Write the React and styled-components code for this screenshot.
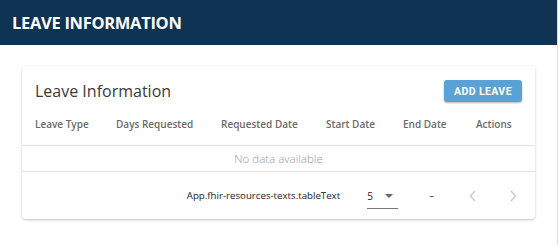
import React from "react";
import styled, { createGlobalStyle } from "styled-components";

const Global = createGlobalStyle`
  html, body { margin: 0; padding: 0; background: #fff; }
  body { font-family: "Open Sans", "Liberation Sans", sans-serif; }
`;

const Page = styled.div`
  width: 557px;
  height: 245px;
  border-right: 1px solid #dcdcdc;
  background: #fff;
`;

const TopBar = styled.header`
  height: 45px;
  background: #0f3352;
  display: flex;
  align-items: center;
  padding-left: 12px;
  color: #fff;
  font-weight: 700;
  font-size: 16.5px;
  letter-spacing: -0.3px;
`;

const Content = styled.main`
  padding: 21px 22px 0 22px;
`;

const Card = styled.section`
  width: 513px;
  height: 153px;
  background: #fff;
  border-radius: 4px;
  box-shadow: 0 1px 3px rgba(0, 0, 0, 0.2), 0 1px 1px rgba(0, 0, 0, 0.06);
  display: flex;
  flex-direction: column;
`;

const TitleRow = styled.div`
  display: flex;
  align-items: center;
  justify-content: space-between;
  padding: 14px 13px 0 13px;
  height: 22px;
`;

const Title = styled.h2`
  margin: 0;
  font-size: 16px;
  font-weight: 400;
  color: #3a3a3a;
`;

const AddButton = styled.button`
  width: 78px;
  height: 22px;
  border: none;
  border-radius: 3px;
  background: #5aa2d6;
  color: #fff;
  font-family: "Roboto", "Liberation Sans", sans-serif;
  font-weight: 700;
  font-size: 10.5px;
  letter-spacing: 0.4px;
  box-shadow: 0 1px 2px rgba(0, 0, 0, 0.3);
  padding: 0;
`;

const Grid = styled.div`
  display: grid;
  grid-template-columns: 81px 105px 105px 77px 73px 1fr;
  padding-left: 13px;
  align-items: center;
`;

const HeadRow = styled(Grid)`
  height: 43px;
  border-bottom: 1px solid #e3e3e3;
`;

const HeadCell = styled.div`
  font-size: 10px;
  font-weight: 600;
  color: #6a6a6a;
  white-space: nowrap;
`;

const EmptyRow = styled.div`
  height: 25px;
  display: flex;
  align-items: center;
  justify-content: center;
  border-bottom: 1px solid #e3e3e3;
  font-size: 11.5px;
  font-weight: 300;
  color: #9a9a9a;
`;

const Footer = styled.div`
  flex: 1;
  display: flex;
  align-items: center;
  justify-content: flex-end;
  padding-right: 16px;
  font-size: 9.7px;
  color: #222;
`;

const FooterText = styled.span`
  margin-right: 27px;
`;

const Select = styled.div`
  width: 31px;
  height: 20px;
  display: flex;
  align-items: center;
  justify-content: space-between;
  border-bottom: 1px solid #777;
  box-sizing: border-box;
  margin-top: 6px;
  padding-bottom: 4px;
  margin-right: 31px;
  font-size: 10px;
`;

const Caret = styled.span`
  width: 0;
  height: 0;
  border-left: 4px solid transparent;
  border-right: 4px solid transparent;
  border-top: 4px solid #666;
  margin-right: 5px;
`;

const Dash = styled.span`
  margin-right: 33px;
`;

const NavButton = styled.span`
  display: inline-flex;
  width: 12px;
  justify-content: center;
  margin-left: ${(p) => p.$gap || 0}px;
`;

const Chevron = ({ dir }) => (
  <svg width="8" height="12" viewBox="0 0 8 12">
    <path
      d={dir === "left" ? "M6 1 L1.5 6 L6 11" : "M2 1 L6.5 6 L2 11"}
      fill="none"
      stroke="#c8c8c8"
      strokeWidth="1.3"
    />
  </svg>
);

const columns = [
  "Leave Type",
  "Days Requested",
  "Requested Date",
  "Start Date",
  "End Date",
  "Actions",
];

export default function App() {
  return (
    <>
      <Global />
      <Page>
        <TopBar>LEAVE INFORMATION</TopBar>
        <Content>
          <Card>
            <TitleRow>
              <Title>Leave Information</Title>
              <AddButton>ADD LEAVE</AddButton>
            </TitleRow>
            <HeadRow>
              {columns.map((c) => (
                <HeadCell key={c}>{c}</HeadCell>
              ))}
            </HeadRow>
            <EmptyRow>No data available</EmptyRow>
            <Footer>
              <FooterText>App.fhir-resources-texts.tableText</FooterText>
              <Select>
                <span>5</span>
                <Caret />
              </Select>
              <Dash>–</Dash>
              <NavButton>
                <Chevron dir="left" />
              </NavButton>
              <NavButton $gap={28}>
                <Chevron dir="right" />
              </NavButton>
            </Footer>
          </Card>
        </Content>
      </Page>
    </>
  );
}
